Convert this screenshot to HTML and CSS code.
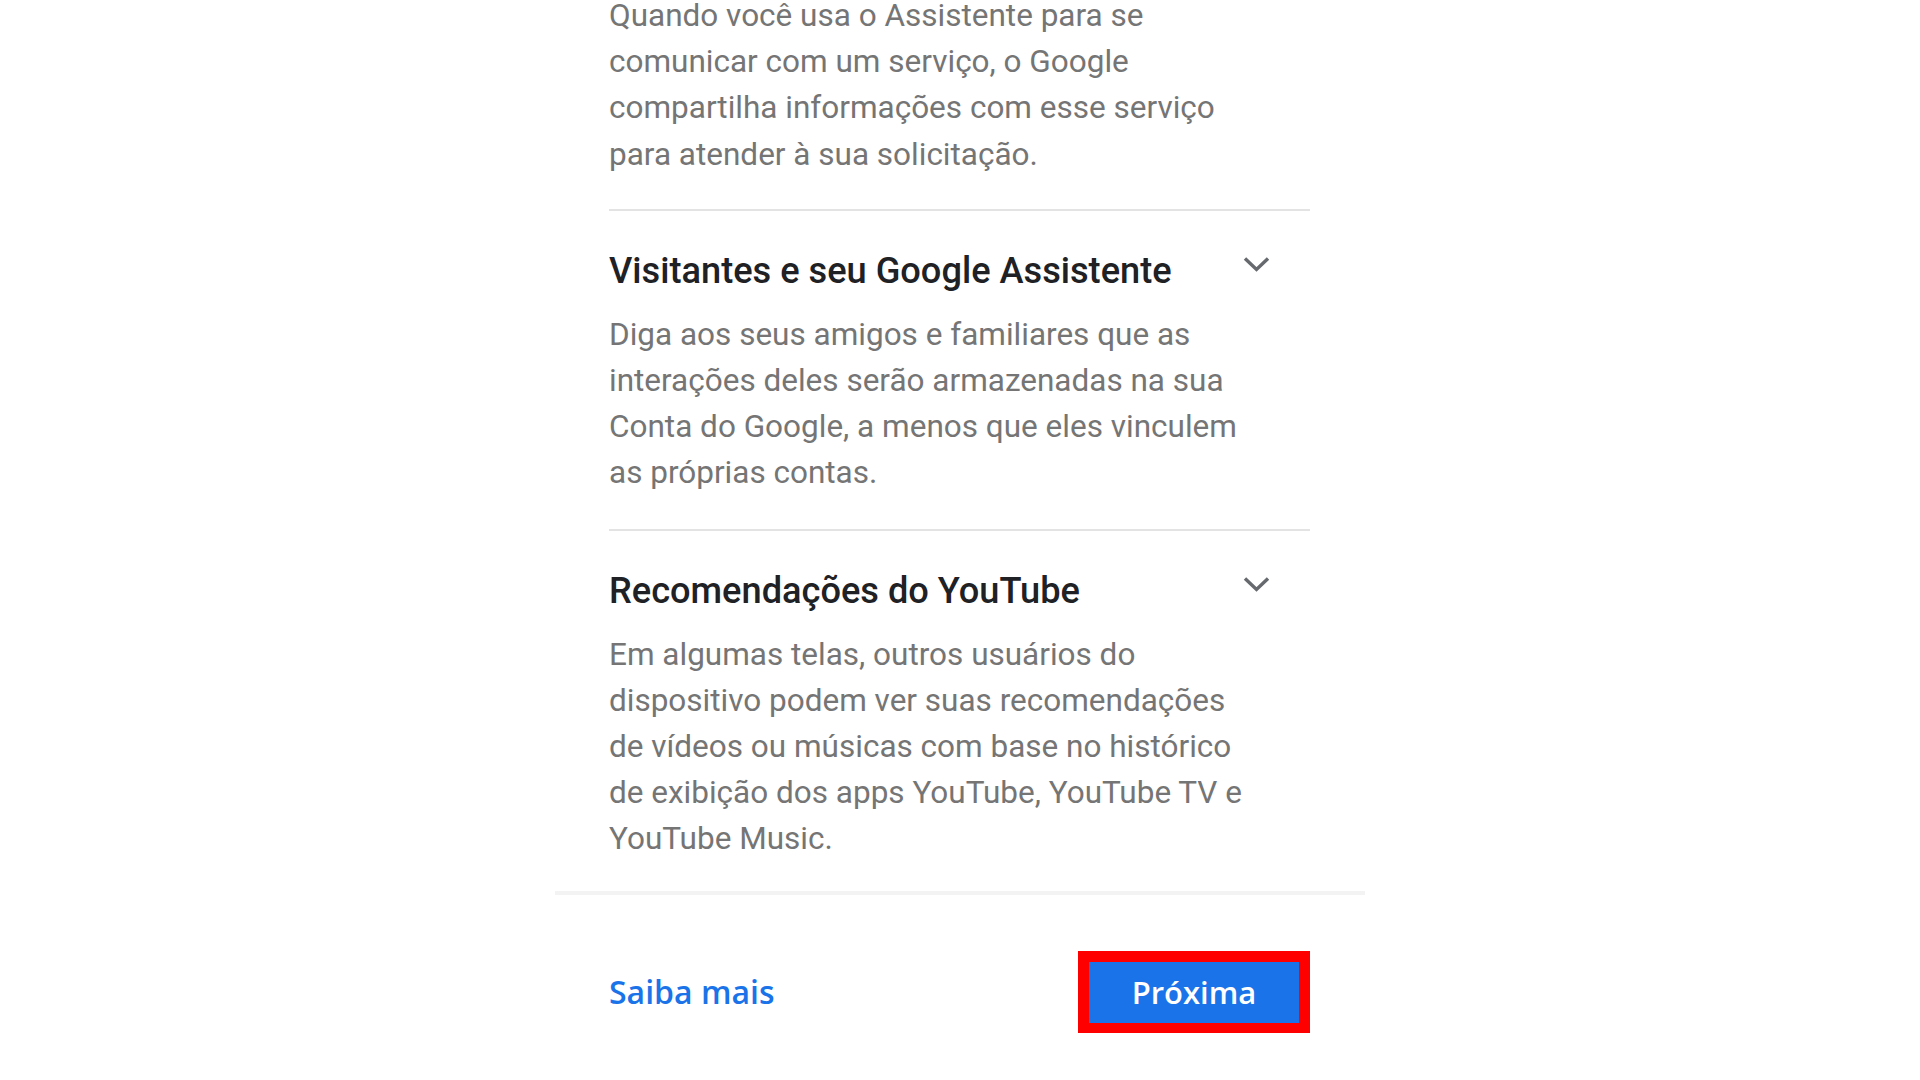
FILE: index.html
```html
<!DOCTYPE html>
<html lang="pt-BR">
<head>
<meta charset="utf-8">
<title>Google Assistente</title>
<link rel="stylesheet" href="styles.css">
</head>
<body>
<main class="sheet">
  <div class="content">
    <p class="text intro">Quando você usa o Assistente para se<br>comunicar com um serviço, o Google<br>compartilha informações com esse serviço<br>para atender à sua solicitação.</p>

    <section class="item">
      <div class="item-head">
        <h2 class="item-title">Visitantes e seu Google Assistente</h2>
        <svg class="chevron" width="27" height="16" viewBox="0 0 27 16" aria-hidden="true"><polyline points="2,2.5 13.5,13.5 25,2.5" fill="none" stroke="#66696d" stroke-width="3.4"/></svg>
      </div>
      <p class="text">Diga aos seus amigos e familiares que as<br>interações deles serão armazenadas na sua<br>Conta do Google, a menos que eles vinculem<br>as próprias contas.</p>
    </section>

    <section class="item last">
      <div class="item-head">
        <h2 class="item-title">Recomendações do YouTube</h2>
        <svg class="chevron" width="27" height="16" viewBox="0 0 27 16" aria-hidden="true"><polyline points="2,2.5 13.5,13.5 25,2.5" fill="none" stroke="#66696d" stroke-width="3.4"/></svg>
      </div>
      <p class="text">Em algumas telas, outros usuários do<br>dispositivo podem ver suas recomendações<br>de vídeos ou músicas com base no histórico<br>de exibição dos apps YouTube, YouTube TV e<br>YouTube Music.</p>
    </section>
  </div>

  <footer class="footer">
    <a class="link" href="#">Saiba mais</a>
    <div class="highlight">
      <button class="primary" type="button">Próxima</button>
    </div>
  </footer>
</main>
</body>
</html>
```

FILE: styles.css
```css
html, body {
  margin: 0;
  padding: 0;
  background: #ffffff;
  height: 1080px;
  overflow: hidden;
}

.sheet {
  width: 810px;
  margin: 0 auto;
  display: flex;
  flex-direction: column;
}

.content {
  padding: 0 55px 0 54px;
  display: flex;
  flex-direction: column;
}

.text {
  margin: 0;
  font-family: Roboto, "Noto Sans", sans-serif;
  font-size: 31.5px;
  line-height: 46.2px;
  color: #757575;
  white-space: nowrap;
}

.intro {
  margin-top: -7px;
  padding-bottom: 31px;
  border-bottom: 2px solid #e3e3e3;
}

.item {
  padding: 38px 0 32px;
  border-bottom: 2px solid #e3e3e3;
}

.item.last {
  border-bottom: none;
  padding-bottom: 28px;
}

.item-head {
  display: flex;
  justify-content: space-between;
  align-items: flex-start;
  margin-bottom: 19px;
}

.item-title {
  margin: 0;
  font-family: Roboto, "Noto Sans", sans-serif;
  font-weight: 500;
  font-size: 36.2px;
  line-height: 44px;
  color: #202124;
}

.chevron {
  margin-top: 7px;
  margin-right: 40px;
  flex: none;
}

.footer {
  border-top: 4px solid #f3f3f3;
  padding: 56px 55px 40px 54px;
  display: flex;
  justify-content: space-between;
  align-items: center;
}

.link {
  font-family: "Open Sans", Roboto, sans-serif;
  font-weight: 600;
  font-size: 32px;
  color: #1a73e8;
  text-decoration: none;
}

.highlight {
  border: 11px solid #ff0000;
  border-bottom-width: 10px;
  display: flex;
}

.primary {
  width: 210px;
  height: 61px;
  border: none;
  border-radius: 0;
  background: #1a73e8;
  color: #ffffff;
  font-family: "Open Sans", Roboto, sans-serif;
  font-weight: 600;
  font-size: 31px;
  padding: 0;
}
```
